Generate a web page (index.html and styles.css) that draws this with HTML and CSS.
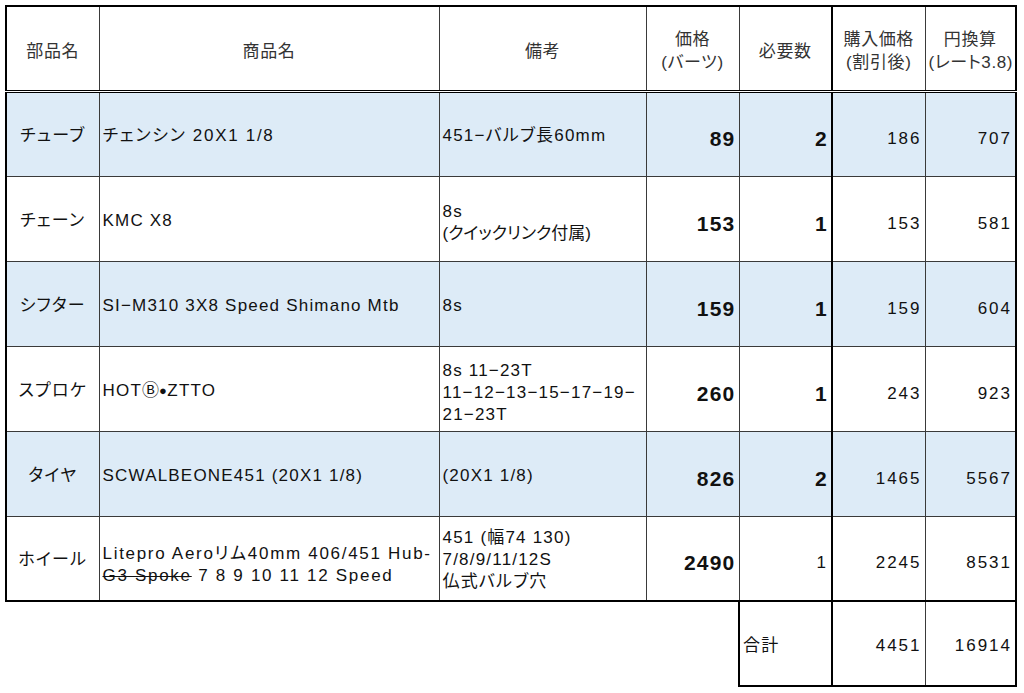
FILE: index.html
```html
<!DOCTYPE html>
<html lang="ja">
<head>
<meta charset="utf-8">
<title>部品リスト</title>
<link rel="stylesheet" href="styles.css">
</head>
<body>
<table class="sheet">
  <colgroup>
    <col class="w-part"><col class="w-name"><col class="w-note"><col class="w-num"><col class="w-num"><col class="w-num"><col class="w-yen">
  </colgroup>
  <thead>
    <tr>
      <th class="edge-l">部品名</th>
      <th>商品名</th>
      <th>備考</th>
      <th>価格<br>(バーツ)</th>
      <th class="thick-r">必要数</th>
      <th>購入価格<br>(割引後)</th>
      <th class="edge-r">円換算<br>(レート3.8)</th>
    </tr>
  </thead>
  <tbody>
    <tr class="band">
      <td class="part edge-l">チューブ</td>
      <td class="txt wide">チェンシン 20X1 1/8</td>
      <td class="txt">451−バルブ長60mm</td>
      <td class="num b">89</td>
      <td class="num b thick-r">2</td>
      <td class="num">186</td>
      <td class="num edge-r">707</td>
    </tr>
    <tr>
      <td class="part edge-l">チェーン</td>
      <td class="txt">KMC X8</td>
      <td class="txt multi">8s<br><span class="tight">(クイックリンク付属)</span></td>
      <td class="num b">153</td>
      <td class="num b thick-r">1</td>
      <td class="num">153</td>
      <td class="num edge-r">581</td>
    </tr>
    <tr class="band">
      <td class="part edge-l">シフター</td>
      <td class="txt">SI−M310 3X8 Speed Shimano Mtb</td>
      <td class="txt">8s</td>
      <td class="num b">159</td>
      <td class="num b thick-r">1</td>
      <td class="num">159</td>
      <td class="num edge-r">604</td>
    </tr>
    <tr>
      <td class="part edge-l">スプロケ</td>
      <td class="txt">HOT<span class="mark">Ⓑ</span><span class="dot">●</span>ZTTO</td>
      <td class="txt multi">8s 11−23T<br>11−12−13−15−17−19−<br>21−23T</td>
      <td class="num b">260</td>
      <td class="num b thick-r">1</td>
      <td class="num">243</td>
      <td class="num edge-r">923</td>
    </tr>
    <tr class="band">
      <td class="part edge-l">タイヤ</td>
      <td class="txt">SCWALBEONE451 (20X1 1/8)</td>
      <td class="txt">(20X1 1/8)</td>
      <td class="num b">826</td>
      <td class="num b thick-r">2</td>
      <td class="num">1465</td>
      <td class="num edge-r">5567</td>
    </tr>
    <tr class="last">
      <td class="part edge-l">ホイール</td>
      <td class="txt wide low">Litepro Aeroリム40mm 406/451 Hub-<br><s>G3 Spoke</s> 7 8 9 10 11 12 Speed</td>
      <td class="txt">451 (幅74 130)<br>7/8/9/11/12S<br>仏式バルブ穴</td>
      <td class="num b">2490</td>
      <td class="num thick-r">1</td>
      <td class="num">2245</td>
      <td class="num edge-r">8531</td>
    </tr>
    <tr class="total">
      <td class="blank" colspan="4"></td>
      <td class="txt label thick-l thick-r">合計</td>
      <td class="num">4451</td>
      <td class="num edge-r">16914</td>
    </tr>
  </tbody>
</table>
</body>
</html>
```

FILE: styles.css
```css
body {
  margin: 0;
  background: #ffffff;
  font-family: "Liberation Sans", "Noto Sans CJK JP", sans-serif;
  color: #111111;
}

.sheet {
  border-collapse: collapse;
  table-layout: fixed;
  width: 1011px;
  margin: 5px 0 0 5px;
  font-size: 17px;
  letter-spacing: 1.2px;
  font-feature-settings: "palt";
}

.w-part { width: 93px; }
.w-name { width: 340px; }
.w-note { width: 207px; }
.w-num { width: 93px; }
.w-yen { width: 91px; }

th,
td {
  border: 1px solid #3a3a3a;
  height: 85px;
  padding: 4px 3px 0;
  vertical-align: middle;
  line-height: 22px;
  white-space: nowrap;
  overflow: hidden;
  box-sizing: border-box;
}

th {
  font-weight: normal;
  font-size: 17px;
  letter-spacing: 0.6px;
  line-height: 23px;
  color: #333333;
  text-align: center;
  padding-top: 6px;
  border-top: 2px solid #000000;
  border-bottom: 3px double #000000;
}

.band td { background: #ddebf7; }

.part { text-align: center; }
.txt { text-align: left; }
.wide { letter-spacing: 1.7px; }
.multi { padding-top: 8px; }
.low { padding-top: 14px; }
.tight { letter-spacing: 0; }

.num {
  text-align: right;
  padding-right: 3px;
  padding-top: 10px;
  letter-spacing: 2px;
  font-size: 17px;
}
.num.b {
  font-weight: bold;
  font-size: 21px;
  letter-spacing: 1.2px;
}

.edge-l { border-left: 2px solid #000000 !important; }
.edge-r { border-right: 2px solid #000000 !important; }
.thick-r { border-right: 2px solid #000000 !important; }
.thick-l { border-left: 2px solid #000000 !important; }

.last td { border-bottom: 2px solid #000000; }

.total td { border-bottom: 2px solid #000000; }
.total .num { padding-top: 4px; }
.total .blank {
  border: none;
  background: transparent;
}
.label { padding-left: 3px; }

.mark {
  font-size: 17px;
  letter-spacing: 0;
}
.dot {
  font-size: 13px;
  letter-spacing: 0.5px;
  vertical-align: 1px;
}

s {
  text-decoration-thickness: 1px;
}
```
